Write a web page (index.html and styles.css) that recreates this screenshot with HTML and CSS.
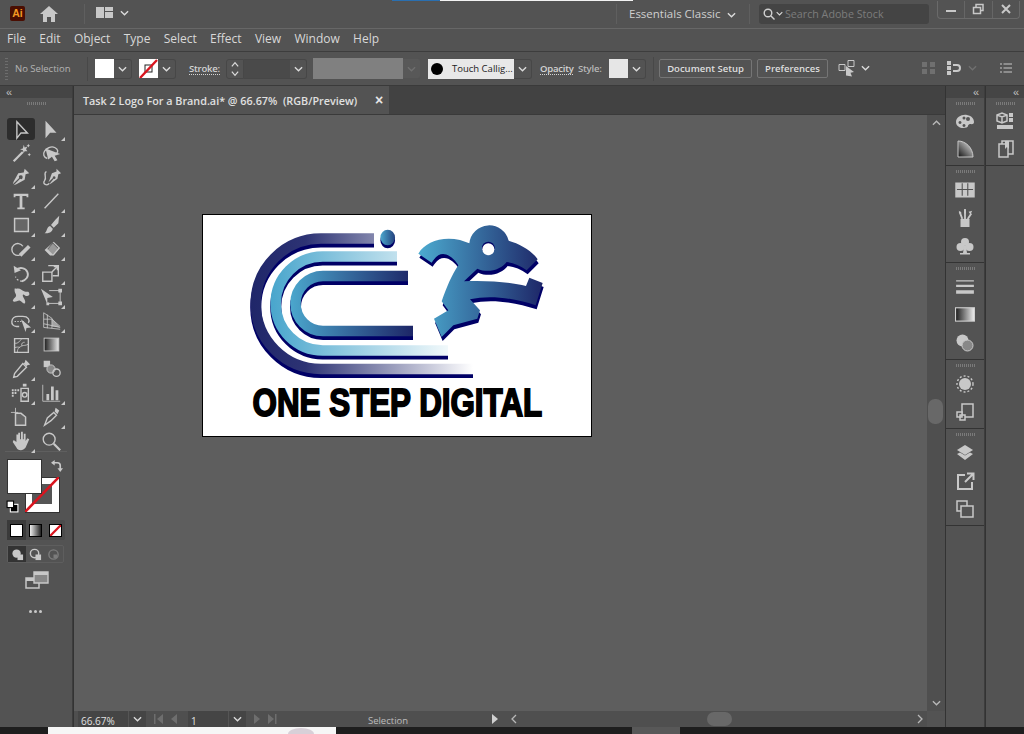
FILE: index.html
```html
<!DOCTYPE html>
<html lang="en">
<head>
<meta charset="utf-8">
<title>Adobe Illustrator</title>
<link rel="stylesheet" href="styles.css">
</head>
<body>
<div class="loadbar"><span class="load-blue"></span><span class="load-white"></span></div>

<header class="titlebar">
  <div class="ai-logo">Ai</div>
  <svg class="home" viewBox="0 0 18 16"><path d="M9 0L0 8h3v8h4v-5h4v5h4V8h3z"/></svg>
  <span class="vsep vsep-a"></span>
  <svg class="layout" viewBox="0 0 17 11"><path d="M0 0h8v11H0zM9 0h8v4H9zM9 5h8v6H9z"/></svg>
  <svg class="chev chev-a" viewBox="0 0 10 6"><path d="M1 1l4 4 4-4"/></svg>
  <span class="spacer"></span>
  <span class="vsep"></span>
  <span class="workspace-name">Essentials Classic</span>
  <svg class="chev chev-b" viewBox="0 0 10 6"><path d="M1 1l4 4 4-4"/></svg>
  <span class="vsep vsep-b"></span>
  <div class="stock">
    <svg class="stock-ico" viewBox="0 0 12 12"><circle cx="5" cy="5" r="3.8"/><path d="M8 8l3.5 3.5"/></svg>
    <svg class="chev chev-s" viewBox="0 0 10 6"><path d="M1 1l4 4 4-4"/></svg>
    <span>Search Adobe Stock</span>
  </div>
  <div class="winctl">
    <span class="win"><svg viewBox="0 0 12 12"><path class="f" d="M1 7h10v2H1z"/></svg></span>
    <span class="win win-mid"><svg viewBox="0 0 12 12"><path class="s" d="M1.500 4.500h7v6h-7zM4 4.500V1.500h7v6H8.500"/></svg></span>
    <span class="win"><svg viewBox="0 0 12 12"><path class="x" d="M2 2l8 8M10 2l-8 8"/></svg></span>
  </div>
</header>

<nav class="menubar">
  <span>File</span><span>Edit</span><span>Object</span><span>Type</span><span>Select</span><span>Effect</span><span>View</span><span>Window</span><span>Help</span>
</nav>

<div class="controlbar">
  <span class="grip-v"></span>
  <span class="no-sel">No Selection</span>
  <span class="cb-sep cb-sep-a"></span>
  <span class="swatch swatch-fill"></span><span class="chevbox"><svg class="chev" viewBox="0 0 10 6"><path d="M1 1l4 4 4-4"/></svg></span>
  <span class="swatch swatch-stroke"><svg viewBox="0 0 19 19"><rect x="6" y="6" width="7" height="7" fill="none" stroke="#222" stroke-width="1"/><path d="M1 19L18 1" stroke="#d9141e" stroke-width="2.400"/></svg></span><span class="chevbox"><svg class="chev" viewBox="0 0 10 6"><path d="M1 1l4 4 4-4"/></svg></span>
  <span class="dotted stroke-lbl">Stroke:</span>
  <span class="stepper"><svg viewBox="0 0 10 20"><path d="M1.500 7l3.500-4 3.500 4M1.500 13l3.500 4 3.500-4"/></svg></span><span class="stroke-input"></span><span class="chevbox chevbox-input"><svg class="chev" viewBox="0 0 10 6"><path d="M1 1l4 4 4-4"/></svg></span>
  <span class="gray-field"></span><span class="chevbox chevbox-off"><svg class="chev" viewBox="0 0 10 6"><path d="M1 1l4 4 4-4"/></svg></span>
  <span class="brush-field"><i class="brush-dot"></i>Touch Callig...</span><span class="chevbox"><svg class="chev" viewBox="0 0 10 6"><path d="M1 1l4 4 4-4"/></svg></span>
  <span class="dotted opacity-lbl">Opacity</span>
  <span class="style-lbl">Style:</span>
  <span class="swatch swatch-style"></span><span class="chevbox"><svg class="chev" viewBox="0 0 10 6"><path d="M1 1l4 4 4-4"/></svg></span>
  <span class="cb-sep cb-sep-b"></span>
  <button class="cb-btn btn-doc">Document Setup</button>
  <button class="cb-btn btn-pref">Preferences</button>
  <svg class="isolate" viewBox="0 0 18 18"><path class="s" d="M1 5.500h6v6H1zM10 1.500h6v6h-6z"/><path class="f" d="M8 7l8 6-3.500.8 1.500 3.700-6-1z"/></svg>
  <svg class="chev chev-iso" viewBox="0 0 10 6"><path d="M1 1l4 4 4-4"/></svg>
  <svg class="cb-grid" viewBox="0 0 14 14"><path d="M0 1h5v5H0zM8 1h5v5H8zM0 8h5v5H0zM8 8h5v5H8z"/></svg>
  <svg class="cb-align" viewBox="0 0 14 14"><path class="f" d="M0 0h4v4H0zM0 5h4v4H0zM0 10h4v4H0z"/><path class="s2" d="M6 4h4a3 3 0 0 1 0 6H6"/></svg>
  <svg class="chev chev-off" viewBox="0 0 10 6"><path d="M1 1l4 4 4-4"/></svg>
  <svg class="cb-list" viewBox="0 0 12 10"><path d="M0 1h2M3.500 1H12M0 5h2M3.500 5H12M0 9h2M3.500 9H12"/></svg>
</div>

<main class="workspace">
  <aside class="toolbar">
    <div class="panel-head"><span class="collapse">&#171;</span></div>
    <div class="grip"></div>
    <div class="tools">
      <span class="tool tool-active"><svg viewBox="0 0 24 24"><path class="s" d="M7.500 4L19 16.300h-7L7.500 22z"/></svg></span>
      <span class="tool tri"><svg viewBox="0 0 24 24"><path class="f" d="M6 3l12 13h-7l-5 6z"/></svg></span>
      <span class="tool"><svg viewBox="0 0 24 24"><path class="s3" d="M4 21L14 11"/><path class="f" d="M15 3l1 3 3-1-1.500 3 1.500 2-3 0-1 2-1-3-3-1 3-1zM20 2l.7 1.500L22 4l-1.300.6L20 6l-.7-1.400L18 4l1.300-.5zM21 12l.6 1.200 1.200.6-1.200.6-.6 1.200-.6-1.200-1.200-.6 1.200-.6z"/></svg></span>
      <span class="tool"><svg viewBox="0 0 24 24"><path class="s" d="M8 18c-4-1-5-5-3-8s7-6 11-4 4 5 2 6"/><path class="f" d="M6 7l16 6-6 2 3 5-3 1-3-5-4 3z"/></svg></span>
      <span class="tool tri"><svg viewBox="0 0 24 24"><path class="f" d="M16 3l5 5-4 1-1 6-9 5-3 1 7-7a2 2 0 1 0-1-1l-7 7 1-3 5-9 6-1z"/></svg></span>
      <span class="tool"><svg viewBox="0 0 24 24"><path class="f" d="M18 3l5 5-3 1-1 5-7 5-2 1 5-6a1.500 1.500 0 1 0-1-1l-5 5 1-2 3-8 5-2z"/><path class="s" d="M7 6C3 8 8 12 5 16s3 6 5 3"/></svg></span>
      <span class="tool tri"><svg viewBox="0 0 24 24"><path class="t" d="M4 4h16v4h-2V6.500h-4.500V19H16v2H8v-2h2.500V6.500H6V8H4z"/></svg></span>
      <span class="tool tri"><svg viewBox="0 0 24 24"><path class="s" d="M5 20L20 4"/></svg></span>
      <span class="tool tri"><svg viewBox="0 0 24 24"><path class="rect" d="M5 5h15v14H5z"/></svg></span>
      <span class="tool tri"><svg viewBox="0 0 24 24"><path class="f" d="M21 2l-1 8-5 5-3-3 5-6zM11 13l3 3c-1 4-4 5-9 5 3-2 2-7 6-8z"/></svg></span>
      <span class="tool tri"><svg viewBox="0 0 24 24"><path class="s" d="M14 16a6.500 6.500 0 1 1 0-7"/><path class="s4" d="M11 19l10-10"/></svg></span>
      <span class="tool tri"><svg viewBox="0 0 24 24"><path class="f" d="M15 4l7 7-7 8-4 0-6-6zM8 12l6 6 6-7-6-6z"/><path class="f" d="M8 13l6-7 6 6-6 7z" opacity=".6"/></svg></span>
      <span class="tool tri"><svg viewBox="0 0 24 24"><path class="s2" d="M6 9c4-4 11-3 13 2s-2 9-6 10"/><path class="dash" d="M13 21c-3 0-6-2-7-5"/><path class="f" d="M4 4l1 8 7-3z"/></svg></span>
      <span class="tool tri"><svg viewBox="0 0 24 24"><path class="s" d="M3 11h10v10H3zM9 4h11v11H14"/><path class="s" d="M13 11l6-6M15 5h4v4"/></svg></span>
      <span class="tool tri"><svg viewBox="0 0 24 24"><path class="f" d="M7 3c4-1 6 2 9 3s4-1 5 2-3 4-5 2-3 0-1 3 2 5 1 6-3-2-5-3-5 2-7 1 0-3 2-5-1-4-1-7 0-2 2-2z"/></svg></span>
      <span class="tool tri"><svg viewBox="0 0 24 24"><path class="dash2" d="M10 5h12v14H8"/><path class="f" d="M1 3l13 9-6 1 0 7z"/><path class="f" d="M20 3h4v4h-4zM20 17h4v4h-4zM7 18h3v3H7z"/></svg></span>
      <span class="tool tri"><svg viewBox="0 0 24 24"><path class="s" d="M10 18H7c-7 0-7-11 2-11h5c6 0 8 4 6 7"/><path class="dot" d="M5 12.500h10"/><path class="f" d="M12 10l11 9-5 .5-1 4.500z"/></svg></span>
      <span class="tool tri"><svg viewBox="0 0 24 24"><path class="s1" d="M4 3v16l18 2M4 3l9 6v11M4 10h9l9 8M8 5v15M4 15l18 4"/><path class="f" d="M13 9l9 10-9-1z" opacity=".7"/></svg></span>
      <span class="tool"><svg viewBox="0 0 24 24"><path class="rect-thin" d="M5 5h15v15H5z"/><path class="s1" d="M5 10c4 1 6-3 8-5M8 20c0-5 3-6 5-7s4 0 7-2M13 13c-1-3 1-4 3-4M5 15c2-1 5-1 6 0"/></svg></span>
      <span class="tool"><svg viewBox="0 0 24 24"><defs><linearGradient id="g-tool"><stop offset="0" stop-color="#1c1c1c"/><stop offset="1" stop-color="#e8e8e8"/></linearGradient></defs><rect x="4.500" y="4.500" width="16" height="14" fill="url(#g-tool)" stroke="#c8c8c8"/></svg></span>
      <span class="tool tri"><svg viewBox="0 0 24 24"><path class="f" d="M17 2l5 5-3 1-1 1-3-3 1-1z"/><path class="s" d="M14 6l4 4L8 20l-4 1 1-4z"/></svg></span>
      <span class="tool"><svg viewBox="0 0 24 24"><path class="f" d="M4 3h7v7H4z"/><circle cx="12" cy="12" r="4.500" fill="#888" stroke="#c8c8c8"/><circle cx="18" cy="16" r="4" fill="none" stroke="#c8c8c8" stroke-width="1.400"/></svg></span>
      <span class="tool tri"><svg viewBox="0 0 24 24"><path class="f" d="M14 2h4v3h-4zM2 8h2v2H2zM5 8h2v2H5zM8 8h2v2H8zM2 11h2v2H2zM5 11h2v2H5zM2 14h2v2H2z"/><path class="s" d="M12 7h8v14h-8z"/><circle cx="16" cy="14" r="2.500" class="s"/></svg></span>
      <span class="tool tri"><svg viewBox="0 0 24 24"><path class="s1" d="M3 3v18h19"/><path class="f" d="M7 13h3v7H7zM12 5h3v15h-3zM17 9h3v11h-3z"/></svg></span>
      <span class="tool"><svg viewBox="0 0 24 24"><path class="s1" d="M1 7h8M6 2v8"/><path class="rect" d="M6 8h6l5 4v9H6z"/></svg></span>
      <span class="tool tri"><svg viewBox="0 0 24 24"><path class="f" d="M17 2l4 3-2 4-3-3z"/><path class="s" d="M15 7l3 3-6 6L5 21l3-8z"/></svg></span>
      <span class="tool tri"><svg viewBox="0 0 24 24"><path class="f" d="M9 3h2v7h1V2h2v8h1V4h2v8l2-3 2 1-3 7c-1 3-3 5-6 5s-4-1-5-3l-4-6 1-2 3 2V5h2z"/></svg></span>
      <span class="tool"><svg viewBox="0 0 24 24"><circle cx="10" cy="10" r="6.500" class="s"/><path class="s3" d="M15 15l7 7"/></svg></span>
    </div>
    <div class="tool-sep"></div>

    <div class="fillstroke">
      <div class="fs-stroke"><svg viewBox="0 0 34 35"><path d="M0 35L34 0" stroke="#d9141e" stroke-width="2.600"/></svg></div>
      <div class="fs-fill"></div>
      <svg class="fs-swap" viewBox="0 0 13 13"><path class="swap-line" d="M3 3H7C9 3 10 4 10 6V10"/><path d="M4 0L0 3L4 6zM7 9h6l-3 4z"/></svg>
      <svg class="fs-default" viewBox="0 0 12 12"><rect x="4" y="4" width="7" height="7" fill="#000" stroke="#fff"/><rect x="1" y="1" width="6" height="6" fill="#fff" stroke="#000"/></svg>
    </div>
    <div class="mode-row">
      <span class="mode mode-on"><i class="mini mini-white"></i></span>
      <span class="mode"><i class="mini mini-grad"></i></span>
      <span class="mode"><i class="mini mini-none"><svg viewBox="0 0 12 12"><path d="M0 12L12 0" stroke="#d9141e" stroke-width="2.500"/></svg></i></span>
    </div>
    <div class="draw-row">
      <span class="draw draw-on"><svg viewBox="0 0 14 14"><circle cx="6" cy="6" r="4.500" class="f"/><rect x="7" y="7" width="6" height="6" class="f"/></svg></span>
      <span class="draw"><svg viewBox="0 0 14 14"><circle cx="6" cy="6" r="4.500" class="s"/><rect x="7" y="7" width="6" height="6" class="f"/></svg></span>
      <span class="draw draw-off"><svg viewBox="0 0 14 14"><circle cx="7" cy="7" r="5" class="s"/><rect x="7" y="7" width="4" height="4" class="f"/></svg></span>
    </div>
    <svg class="screen-mode" viewBox="0 0 24 18"><path class="s" d="M1 7h13v10H1z"/><path class="fs" d="M9 1h14v11H9z"/><path class="fb" d="M9 1h14v3H9zM1 7h8v3H1z"/></svg>
    <div class="more"><i></i><i></i><i></i></div>
  </aside>

  <section class="center">
    <div class="tabbar">
      <div class="doc-tab"><span class="doc-title">Task 2 Logo For a Brand.ai* @ 66.67%  (RGB/Preview)</span><span class="doc-close">&#215;</span></div>
    </div>
    <div class="center-main">
      <div class="canvas">
        <div class="artboard">
          <svg class="logo" viewBox="203 215 388 221">
            <defs>
              <linearGradient id="g-outer" gradientUnits="userSpaceOnUse" x1="250" y1="0" x2="473" y2="0"><stop offset="0" stop-color="#1f2669"/><stop offset=".25" stop-color="#2d3374"/><stop offset="1" stop-color="#ffffff"/></linearGradient>
              <linearGradient id="g-mid" gradientUnits="userSpaceOnUse" x1="270" y1="0" x2="448" y2="0"><stop offset="0" stop-color="#48a5cc"/><stop offset="1" stop-color="#f2f9fb"/></linearGradient>
              <linearGradient id="g-inner" gradientUnits="userSpaceOnUse" x1="290" y1="0" x2="413" y2="0"><stop offset="0" stop-color="#4ba7cd"/><stop offset="1" stop-color="#1d2567"/></linearGradient>
              <linearGradient id="g-dot"><stop offset="0" stop-color="#4ba7cd"/><stop offset="1" stop-color="#24427e"/></linearGradient>
              <linearGradient id="g-run" gradientUnits="userSpaceOnUse" x1="145" y1="0" x2="518" y2="0"><stop offset="0" stop-color="#4cabd0"/><stop offset="1" stop-color="#1e2768"/></linearGradient>
            </defs>
            <g class="c-shadow">
              <path d="M374 242H321A65.250 65.250 0 0 0 321 372.500H473"/>
              <path d="M397 260H322.700A47 47 0 0 0 322.700 354H448"/>
              <path d="M408 279.500H323A27.500 27.500 0 0 0 323 334.500H413"/>
            </g>
            <path class="c-band" stroke="url(#g-outer)" d="M374 238.500H321A65.250 65.250 0 0 0 321 369H473"/>
            <path class="c-band" stroke="url(#g-mid)" d="M397 256.500H322.700A47 47 0 0 0 322.700 350.500H448"/>
            <path class="c-band" stroke="url(#g-inner)" d="M408 276H323A27.500 27.500 0 0 0 323 331H413"/>
            <ellipse cx="387.700" cy="240.500" rx="7.300" ry="7.800" fill="#000066"/>
            <ellipse cx="387.700" cy="237.500" rx="7.300" ry="7.800" fill="url(#g-dot)"/>
            <g transform="translate(370 212) scale(.33333)">
              <path fill="#000066" transform="translate(3 12)" d="M145 125C165 90 215 72 270 84L298 94A60 60 0 0 1 416 86C450 95 490 120 503 142L470 175C450 160 430 152 410 150C395 172 355 185 322 170L282 208C350 205 420 210 468 222L478 197L518 213L497 280C430 258 360 248 300 262L330 295L322 320L250 340L215 375L192 320L235 295L215 268C230 225 245 190 265 160C250 135 225 118 205 130C195 137 190 145 185 152Z"/>
              <path fill="url(#g-run)" d="M145 125C165 90 215 72 270 84L298 94A60 60 0 0 1 416 86C450 95 490 120 503 142L470 175C450 160 430 152 410 150C395 172 355 185 322 170L282 208C350 205 420 210 468 222L478 197L518 213L497 280C430 258 360 248 300 262L330 295L322 320L250 340L215 375L192 320L235 295L215 268C230 225 245 190 265 160C250 135 225 118 205 130C195 137 190 145 185 152Z"/>
              <circle cx="355" cy="108" r="19" fill="#000066"/>
              <circle cx="355" cy="112" r="18" fill="#fff"/>
            </g>
            <text class="logo-text" transform="translate(252.500 416) scale(.825 1)">ONE STEP DIGITAL</text>
          </svg>
        </div>
      </div>
      <div class="vscroll">
        <svg class="chev chev-up" viewBox="0 0 10 6"><path d="M1 5l4-4 4 4"/></svg>
        <span class="v-thumb"></span>
        <svg class="chev chev-down" viewBox="0 0 10 6"><path d="M1 1l4 4 4-4"/></svg>
      </div>
    </div>
    <div class="statusbar">
      <span class="zoom-field">66.67%</span><span class="st-chev"><svg class="chev" viewBox="0 0 10 6"><path d="M1 1l4 4 4-4"/></svg></span>
      <span class="nav nav-prev"><svg viewBox="0 0 28 10"><path d="M1 0h1.500v10H1zM10 0v10L4 5zM24 0v10l-6-5z"/></svg></span>
      <span class="page-field">1</span><span class="st-chev"><svg class="chev" viewBox="0 0 10 6"><path d="M1 1l4 4 4-4"/></svg></span>
      <span class="nav nav-next"><svg viewBox="0 0 28 10"><path d="M2 0v10l6-5zM16 0v10l6-5zM23 0h1.500v10H23z"/></svg></span>
      <span class="st-label">Selection</span>
      <svg class="st-play" viewBox="0 0 6 10"><path d="M0 0v10l6-5z"/></svg>
      <div class="hscroll">
        <svg class="h-arrow" viewBox="0 0 6 10"><path d="M5 1L1 5l4 4"/></svg>
        <span class="h-thumb"></span>
        <svg class="h-arrow" viewBox="0 0 6 10"><path d="M1 1l4 4-4 4"/></svg>
      </div>
      <span class="corner"></span>
    </div>
  </section>

  <aside class="dock dock-a">
    <div class="panel-head"><span class="collapse">&#171;</span></div>
    <div class="dock-sec sec-68">
      <div class="grip"></div>
      <svg class="di" viewBox="0 0 20 16"><path class="f" fill-rule="evenodd" d="M1 9c0-5 6-8 11-7s7 4 7 7-3 2-4 2-2 1-2 2-2 2-5 2-7-2-7-6zM5 8a1.500 1.500 0 1 0 .01 0zM9 11a1.500 1.500 0 1 0 .01 0zM4 5a0 0 0 0 0 0 0z"/><circle cx="13" cy="6" r="2" fill="#555"/><circle cx="9" cy="5" r="1.500" fill="#555"/></svg>
      <svg class="di" viewBox="0 0 18 18"><defs><linearGradient id="g-guide" x1="0" y1="1" x2="1" y2="0"><stop offset="0" stop-color="#111"/><stop offset="1" stop-color="#eee"/></linearGradient></defs><path d="M2 1c8 0 15 7 15 16H2z" fill="url(#g-guide)" stroke="#c8c8c8"/></svg>
    </div>
    <div class="dock-sec sec-97">
      <div class="grip"></div>
      <svg class="di" viewBox="0 0 18 14"><path class="s" d="M1 1h16v12H1z"/><path class="f" d="M1 1h16v5H1zM1 7h5v6H1zM7 7h4v6H7zM12 7h5v6h-5z"/><path d="M6.500 1v5M11.500 1v5" stroke="#555"/></svg>
      <svg class="di" viewBox="0 0 18 20"><path class="f" d="M4 11h10v9H4z"/><path class="s2" d="M6 11L3 3M9 11V1M12 11l4-6"/><path class="f" d="M2 2l3 2-1 4zM8 0h2v5H8zM13 3l4-1-2 4z"/></svg>
      <svg class="di" viewBox="0 0 18 18"><circle cx="9" cy="5" r="4" class="f"/><circle cx="4.500" cy="10" r="4" class="f"/><circle cx="13.500" cy="10" r="4" class="f"/><path class="f" d="M8 9h2l1 7h3v1.500H4V16h3z"/></svg>
    </div>
    <div class="dock-sec sec-97">
      <div class="grip"></div>
      <svg class="di" viewBox="0 0 18 14"><path class="f" d="M1 1h16v1H1zM1 5h16v2H1zM1 10h16v3H1z"/></svg>
      <svg class="di" viewBox="0 0 18 14"><defs><linearGradient id="g-grad"><stop offset="0" stop-color="#1a1a1a"/><stop offset="1" stop-color="#f0f0f0"/></linearGradient></defs><rect x=".5" y=".5" width="17" height="12" fill="url(#g-grad)" stroke="#d0d0d0"/></svg>
      <svg class="di" viewBox="0 0 18 18"><circle cx="6.500" cy="6.500" r="6" class="f"/><circle cx="11.500" cy="11.500" r="5.500" fill="#888" stroke="#c8c8c8"/></svg>
    </div>
    <div class="dock-sec sec-69">
      <div class="grip"></div>
      <svg class="di" viewBox="0 0 18 18"><circle cx="9" cy="9" r="6" class="f"/><circle cx="9" cy="9" r="8" class="dash"/></svg>
      <svg class="di" viewBox="0 0 18 18"><path class="s" d="M6 1h11v13H6z"/><path class="s-bg" d="M1 9h5v5H1zM4 12h5v5H4z"/></svg>
    </div>
    <div class="dock-sec sec-97">
      <div class="grip"></div>
      <svg class="di" viewBox="0 0 18 18"><path class="f" d="M9 1l8 5-8 5-8-5z"/><path class="f" d="M1 10l3-1.500 5 3 5-3 3 1.500-8 6z"/></svg>
      <svg class="di" viewBox="0 0 18 18"><path class="s2" d="M9 3H2v14h14v-7"/><path class="s2" d="M9 10l8-8M11 1.500h6.500V8"/></svg>
      <svg class="di" viewBox="0 0 18 18"><path class="s" d="M1 1h10v10H1z"/><path class="s-bg" d="M5 6h12v11H5z"/></svg>
    </div>
  </aside>
  <aside class="dock dock-b">
    <div class="panel-head"><span class="collapse">&#171;</span></div>
    <div class="dock-sec sec-68">
      <div class="grip"></div>
      <svg class="di" viewBox="0 0 18 18"><path class="s" d="M1 3l5-2 5 2v6l-5 2-5-2zM1 3l5 2 5-2M6 5v6"/><path class="f" d="M13 1h4v4h-4zM13 6h4v4h-4zM1 13h16v4H1z"/></svg>
      <svg class="di" viewBox="0 0 18 18"><path class="s" d="M3 4h9v13H3zM6 4V1h11v13h-5"/><path class="f" d="M9 1h4v8l-2-2-2 2z"/></svg>
    </div>
  </aside>
</main>

<footer class="taskstrip">
  <span class="task-white"><i class="task-arc"></i></span>
  <span class="task-gray"></span>
</footer>
</body>
</html>
```
FILE: styles.css
```css
* { box-sizing: border-box; }
html, body { margin: 0; padding: 0; }
body {
  width: 1024px; height: 734px; overflow: hidden;
  display: flex; flex-direction: column; position: relative;
  background: #535353; color: #d6d6d6;
  font-family: "Open Sans", "Noto Sans", sans-serif;
}
svg { display: block; }
i { font-style: normal; }
.chev { width: 9px; height: 6px; fill: none; stroke: #dcdcdc; stroke-width: 1.500; flex: none; }
.f { fill: #c8c8c8; stroke: none; }
.s { fill: none; stroke: #c8c8c8; stroke-width: 1.500; }
.s1 { fill: none; stroke: #c8c8c8; stroke-width: .9; }
.s2 { fill: none; stroke: #c8c8c8; stroke-width: 2; }
.s3 { fill: none; stroke: #c8c8c8; stroke-width: 2.400; }
.s4 { fill: none; stroke: #c8c8c8; stroke-width: 4; }
.t { fill: #c8c8c8; }
.rect { fill: #666; stroke: #c8c8c8; stroke-width: 1.600; }
.rect-thin { fill: none; stroke: #c8c8c8; stroke-width: 1.500; }
.dash { fill: none; stroke: #c8c8c8; stroke-width: 1.400; stroke-dasharray: 2 2; }
.dash2 { fill: none; stroke: #c8c8c8; stroke-width: 1; }
.dot { fill: none; stroke: #c8c8c8; stroke-width: 1.200; stroke-dasharray: 1.500 1.500; }
.s-bg { fill: #535353; stroke: #c8c8c8; stroke-width: 1.500; }
.fs { fill: #888; stroke: #c8c8c8; stroke-width: 1.400; }
.fb { fill: #c8c8c8; }

/* top load indicator */
.loadbar { position: absolute; top: 0; left: 392px; display: flex; height: 1px; }
.load-blue { width: 48px; background: #2a6fb0; }
.load-white { width: 193px; background: #f2f2f2; }

/* title bar */
.titlebar { height: 29px; flex: none; display: flex; align-items: center; border-bottom: 1px solid #676767; padding-left: 10px; }
.ai-logo { width: 15px; height: 15px; margin-top: -1px; background: #4a0e02; border-radius: 2px; color: #f59a23; font-size: 10.500px; font-weight: 700; line-height: 15px; text-align: center; font-family: "Liberation Sans", sans-serif; }
.home { width: 18px; height: 16px; margin-left: 15px; fill: #c8c8c8; }
.vsep { width: 1px; height: 20px; background: #5f5f5f; flex: none; }
.vsep-a { margin-left: 26px; }
.vsep-b { margin-left: 0; }
.layout { width: 17px; height: 11px; margin-left: 11px; margin-top: -3px; fill: #c8c8c8; }
.chev-a { margin-left: 7px; margin-top: -3px; }
.spacer { flex: 1; }
.workspace-name { font-size: 11.500px; width: 88px; margin-left: 12px; white-space: nowrap; color: #cfcfcf; margin-top: -1px; }
.chev-b { margin: 2px 13px 0 10px; }
.stock { width: 170px; height: 20px; margin-left: 9px; margin-top: -1px; background: #444; border-radius: 3px; display: flex; align-items: center; padding-left: 4px; font-size: 10.700px; color: #7c7c7c; white-space: nowrap; }
.stock-ico { width: 12px; height: 12px; fill: none; stroke: #d0d0d0; stroke-width: 1.400; }
.chev-s { width: 7px; height: 5px; margin: 0 2px 0 1px; }
.winctl { width: 83px; height: 18px; margin-left: 8px; margin-top: -9px; margin-right: 4px; display: flex; border: 1px solid #6a6a6a; border-top: 0; border-radius: 0 0 4px 4px; }
.win { flex: 1; display: flex; align-items: center; justify-content: center; }
.win-mid { border-left: 1px solid #666; border-right: 1px solid #666; }
.win svg { width: 12px; height: 12px; }
.win .x { fill: none; stroke: #c8c8c8; stroke-width: 2; }

/* menu */
.menubar { height: 23px; flex: none; display: flex; align-items: center; padding-left: 7px; gap: 13.300px; font-size: 12px; color: #d8d8d8; border-bottom: 1px solid #3d3d3d; padding-bottom: 4px; }

/* control bar */
.controlbar { height: 33px; flex: none; display: flex; align-items: center; font-size: 10px; color: #d4d4d4; white-space: nowrap; }
.grip-v { width: 3px; height: 22px; margin-left: 5px; background: repeating-linear-gradient(#6d6d6d 0 1px, transparent 1px 3px); }
.no-sel { margin-left: 7px; width: 55px; color: #b4b4b4; font-size: 9.500px; }
.cb-sep { width: 1px; height: 24px; background: #484848; flex: none; }
.cb-sep-a { margin-left: 17px; margin-right: 7px; }
.cb-sep-b { margin-left: 7px; margin-right: 5px; }
.swatch { width: 19px; height: 19px; background: #fff; flex: none; }
.swatch-stroke { margin-left: 7px; }
.swatch-style { margin-left: 6px; background: #e6e6e6; }
.chevbox { width: 18px; height: 20px; border: 1px solid #474747; border-left: 0; border-radius: 0 3px 3px 0; display: flex; align-items: center; justify-content: center; flex: none; }
.dotted { border-bottom: 1px dotted #d4d4d4; line-height: 11px; font-size: 9.500px; font-weight: 600; letter-spacing: -.2px; }
.stroke-lbl { margin-left: 13px; width: 31px; }
.stepper { width: 18px; height: 20px; margin-left: 6px; border: 1px solid #474747; border-radius: 3px 0 0 3px; display: flex; align-items: center; justify-content: center; }
.stepper svg { width: 10px; height: 18px; fill: none; stroke: #dcdcdc; stroke-width: 1.400; }
.stroke-input { width: 46px; height: 20px; background: #4a4a4a; border-top: 1px solid #474747; border-bottom: 1px solid #474747; }
.chevbox-input { width: 17px; }
.gray-field { width: 90px; height: 21px; margin-left: 6px; background: #808080; }
.chevbox-off { border-color: #535353; background: #585858; height: 21px; }
.chevbox-off .chev { stroke: #6f6f6f; }
.brush-field { width: 86px; height: 20px; margin-left: 7px; background: #e8e8e8; color: #222; display: flex; align-items: center; padding-left: 3px; gap: 9px; font-size: 9.500px; overflow: hidden; }
.brush-dot { width: 12px; height: 12px; border-radius: 50%; background: #000; flex: none; }
.opacity-lbl { margin-left: 8px; width: 33px; }
.style-lbl { margin-left: 5px; width: 25px; color: #b8b8b8; font-weight: 600; font-size: 9.500px; letter-spacing: -.2px; }
.cb-btn { height: 19px; padding: 0; border: 1px solid #757575; border-radius: 2px; background: transparent; color: #dedede; font: 600 9.500px "Open Sans", sans-serif; white-space: nowrap; }
.btn-doc { width: 93px; }
.btn-pref { width: 71px; margin-left: 5px; }
.isolate { width: 18px; height: 18px; margin-left: 10px; margin-top: -2px; }
.isolate .s { stroke-width: 1; }
.chev-iso { margin-left: 5px; margin-top: -2px; }
.cb-grid { width: 14px; height: 14px; margin-left: 52px; fill: #707070; margin-top: -2px; }
.cb-align { width: 14px; height: 14px; margin-left: 11px; margin-top: -2px; }
.chev-off { margin-left: 7px; stroke: #707070; margin-top: -2px; }
.cb-list { width: 12px; height: 10px; margin-left: 23px; fill: none; stroke: #c8c8c8; stroke-width: 1.100; margin-top: -2px; }

/* workspace */
.workspace { flex: 1; min-height: 0; display: flex; background: #3d3d3d; border-top: 1px solid #3a3a3a; }
.panel-head { height: 12px; background: #454545; position: relative; display: flex; align-items: center; }
.collapse { font: 11px/12px "Liberation Sans", sans-serif; color: #c0c0c0; }
.grip { height: 3px; width: 19px; margin: 4px auto 0; flex: none; background: repeating-linear-gradient(90deg, #7a7a7a 0 1px, transparent 1px 2px); }

/* tools */
.toolbar { width: 72px; flex: none; background: #535353; display: flex; flex-direction: column; }
.toolbar .panel-head { padding-left: 6px; }
.tools { display: grid; grid-template-columns: 30px 30px; grid-auto-rows: 24px; margin: 12px 0 0 6px; }
.tool { position: relative; display: flex; align-items: center; justify-content: center; }
.tool svg { width: 22px; height: 22px; }
.tool-active { background: #2d2d2d; border-radius: 3px; width: 28px; height: 22px; margin: 1px 0 0 1px; }
.tri::after { content: ""; position: absolute; right: 1px; bottom: 0; border: 2px solid transparent; border-right-color: #c8c8c8; border-bottom-color: #c8c8c8; }
.tool-sep { height: 1px; background: #5f5f5f; margin: -2px 5px 0; }

.fillstroke { position: relative; height: 54px; margin: 7px 0 0 7px; flex: none; }
.fs-fill { position: absolute; left: 0; top: 0; width: 35px; height: 35px; background: #fff; border: 1px solid #333; }
.fs-stroke { position: absolute; left: 18px; top: 18px; width: 35px; height: 36px; background: #fff; border: 1px solid #333; }
.fs-stroke::before { content: ""; position: absolute; left: 6px; top: 6px; width: 20px; height: 20px; background: #555; }
.fs-stroke svg { position: absolute; left: -1px; top: -1px; width: 34px; height: 35px; }
.fs-swap { position: absolute; left: 44px; top: 1px; width: 12px; height: 12px; fill: #c8c8c8; }
.swap-line { fill: none; stroke: #c8c8c8; stroke-width: 1.800; }
.fs-default { position: absolute; left: -1px; top: 41px; width: 13px; height: 13px; }
.mode-row { display: flex; gap: 0; margin: 7px 0 0 7px; width: 58px; height: 20px; background: #4c4c4c; border-radius: 2px; flex: none; }
.mode { width: 20px; height: 20px; display: flex; align-items: center; justify-content: center; }
.mode-on { background: #3a3a3a; }
.mini { display: block; width: 13px; height: 13px; border: 1px solid #000; position: relative; }
.mini-white { background: #fff; }
.mini-grad { background: linear-gradient(90deg, #eee, #222); }
.mini-none { background: #fff; }
.mini-none svg { width: 11px; height: 11px; }
.draw-row { display: flex; margin: 5px 0 0 7px; width: 57px; height: 18px; border: 1px solid #5e5e5e; border-radius: 2px; flex: none; }
.draw { width: 19px; display: flex; align-items: center; justify-content: center; }
.draw svg { width: 13px; height: 13px; }
.draw-on { background: #333; }
.draw-off { opacity: .35; }
.screen-mode { width: 24px; height: 18px; margin: 8px 0 0 25px; flex: none; }
.more { display: flex; gap: 2px; margin: 21px 0 0 29px; }
.more i { width: 3px; height: 3px; border-radius: 50%; background: #c8c8c8; }

/* center */
.center { width: 872px; margin-left: 1px; flex: none; display: flex; flex-direction: column; border-left: 1px solid #333; }
.tabbar { height: 29px; flex: none; background: #424242; border-bottom: 1px solid #3a3a3a; }
.doc-tab { width: 315px; height: 28px; background: #535353; display: flex; align-items: center; padding-left: 9px; font-size: 10.800px; font-weight: 600; color: #e0e0e0; white-space: pre; }
.doc-title { width: 292px; }
.doc-close { font: 700 14px "Liberation Sans", sans-serif; color: #e6e6e6; }
.center-main { flex: 1; min-height: 0; display: flex; }
.canvas { flex: 1; background: #5e5e5e; padding: 99px 0 0 128px; }
.artboard { width: 390px; height: 223px; background: #fff; border: 1px solid #000; }
.logo { width: 388px; height: 221px; }
.c-shadow { fill: none; stroke: #000066; stroke-width: 11; }
.c-band { fill: none; stroke-width: 10.500; }
.logo-text { font: 700 38px "Liberation Sans", sans-serif; fill: #000; stroke: #000; stroke-width: 1.800; }
.vscroll { width: 18px; flex: none; background: #4f4f4f; position: relative; display: flex; flex-direction: column; align-items: center; padding: 5px 0; justify-content: space-between; }
.chev-up, .chev-down { stroke: #b8b8b8; }
.v-thumb { position: absolute; left: 1px; top: 284px; width: 15px; height: 25px; border-radius: 7px; background: #686868; }

.statusbar { height: 16px; flex: none; background: #4f4f4f; display: flex; align-items: center; font-size: 9.500px; color: #d0d0d0; padding-left: 4px; }
.zoom-field { width: 50px; height: 16px; background: #454545; padding-left: 3px; font-size: 10px; line-height: 20px; color: #e0e0e0; }
.st-chev { width: 18px; height: 16px; display: flex; align-items: center; justify-content: center; background: #454545; border-left: 1px solid #555; }
.nav { height: 16px; display: flex; align-items: center; justify-content: center; width: 40px; }
.nav svg { width: 28px; height: 10px; fill: #6e6e6e; }
.nav-prev { width: 42px; }
.page-field { width: 40px; height: 16px; background: #454545; padding-left: 3px; font-size: 10px; line-height: 20px; color: #e0e0e0; }
.st-label { width: 200px; text-align: center; margin-left: 2px; padding-top: 3px; color: #bcbcbc; }
.st-play { width: 6px; height: 10px; fill: #d0d0d0; margin-left: 4px; }
.hscroll { flex: 1; height: 16px; display: flex; align-items: center; justify-content: space-between; padding: 0 4px 0 13px; position: relative; margin-left: 0; }
.h-arrow { width: 6px; height: 10px; fill: none; stroke: #b8b8b8; stroke-width: 1.300; }
.h-thumb { position: absolute; left: 209px; top: 1px; width: 25px; height: 14px; border-radius: 7px; background: #686868; }
.corner { width: 18px; height: 16px; background: #535353; flex: none; }

/* right docks */
.dock { background: #535353; display: flex; flex-direction: column; flex: none; border-left: 1px solid #333; }
.dock-a { width: 39px; }
.dock-b { margin-left: 1px; flex: 1; }
.dock .panel-head { justify-content: flex-end; padding-right: 5px; }
.dock-sec { display: flex; flex-direction: column; align-items: center; border-bottom: 1px solid #333; flex: none; }
.sec-68 { height: 68px; }
.sec-97 { height: 97px; }
.sec-69 { height: 69px; }
.di { width: 20px; height: 18px; margin-bottom: 10px; flex: none; }
.grip + .di { margin-top: 8px; }
.sec-68 .grip + .di { margin-top: 7px; }

/* task strip */
.taskstrip { height: 7px; flex: none; background: #1e1e1e; display: flex; }
.task-white { width: 288px; margin-left: 48px; background: #f6f6f6; position: relative; overflow: hidden; }
.task-arc { position: absolute; left: 240px; top: 1px; width: 26px; height: 12px; border-radius: 50%; background: #d8d0d8; }
.task-gray { width: 48px; margin-left: 296px; background: #585858; }
```
